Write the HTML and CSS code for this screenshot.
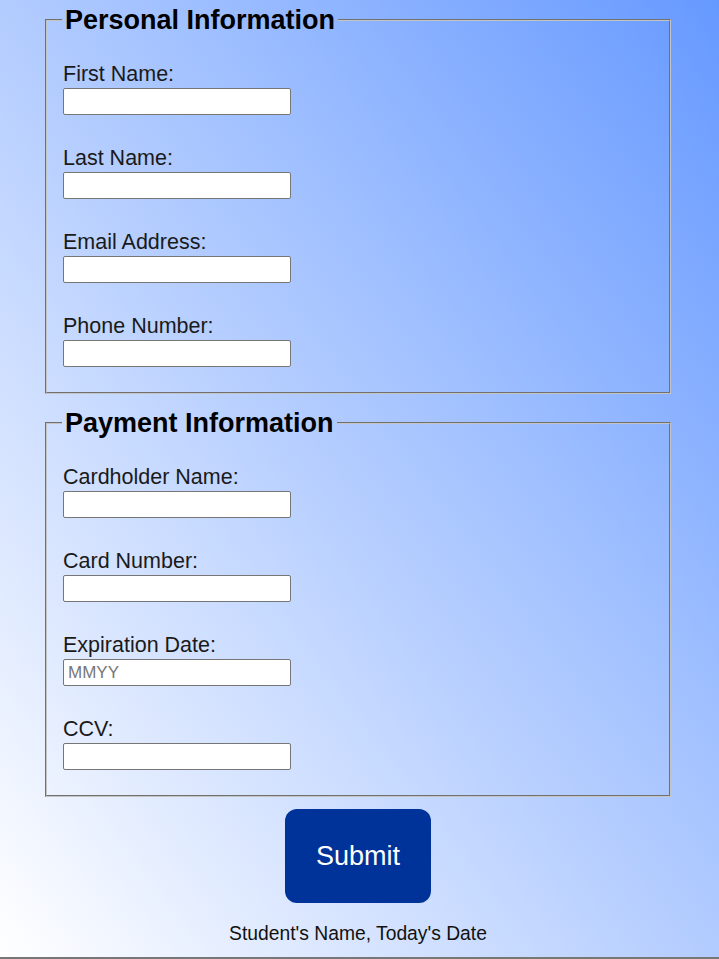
FILE: index.html
```html
<!DOCTYPE html>
<html lang="en">
<head>
<meta charset="utf-8">
<title>Order Form</title>
<link rel="stylesheet" href="styles.css">
</head>
<body>
<main class="page">
  <form class="form">
    <fieldset class="group">
      <legend class="group-title">Personal Information</legend>
      <div class="field"><label class="field-label" for="fn">First Name:</label><input class="field-input" id="fn" type="text"></div>
      <div class="field"><label class="field-label" for="ln">Last Name:</label><input class="field-input" id="ln" type="text"></div>
      <div class="field"><label class="field-label" for="em">Email Address:</label><input class="field-input" id="em" type="text"></div>
      <div class="field"><label class="field-label" for="ph">Phone Number:</label><input class="field-input" id="ph" type="text"></div>
    </fieldset>
    <fieldset class="group">
      <legend class="group-title">Payment Information</legend>
      <div class="field"><label class="field-label" for="cn">Cardholder Name:</label><input class="field-input" id="cn" type="text"></div>
      <div class="field"><label class="field-label" for="cc">Card Number:</label><input class="field-input" id="cc" type="text"></div>
      <div class="field"><label class="field-label" for="ex">Expiration Date:</label><input class="field-input" id="ex" type="text" placeholder="MMYY"></div>
      <div class="field"><label class="field-label" for="cv">CCV:</label><input class="field-input" id="cv" type="text"></div>
    </fieldset>
    <button class="submit" type="button">Submit</button>
    <footer class="footer">Student's Name, Today's Date</footer>
  </form>
</main>
</body>
</html>
```
FILE: styles.css
```css
html, body {
  margin: 0;
  padding: 0;
}
body {
  font-family: "Liberation Sans", Arial, sans-serif;
  color: #111;
  background: linear-gradient(to top right, #ffffff 0%, #6699ff 100%);
  min-height: 959px;
}
.page {
  box-sizing: border-box;
  height: 959px;
  padding: 6px 0 0 45px;
  border-bottom: 2px solid #777;
}
.form {
  width: 626px;
  display: flex;
  flex-direction: column;
  align-items: center;
}
.group {
  box-sizing: border-box;
  width: 626px;
  margin: 0 0 15px 0;
  padding: 0 14px 25px 16px;
  border: 2px groove #c4c4c4;
  display: flex;
  flex-direction: column;
  gap: 31px;
}
.group-title {
  font-size: 27px;
  font-weight: bold;
  line-height: 28px;
  padding: 0 3px;
  margin-left: -1px;
  color: #000;
}
.field {
  display: flex;
  flex-direction: column;
  align-items: flex-start;
  gap: 2px;
}
.group .field:first-of-type {
  margin-top: 28px;
}
.field-label {
  font-size: 21.5px;
  line-height: 24px;
  color: #1a1a1a;
}
.field-input {
  box-sizing: border-box;
  width: 228px;
  height: 27px;
  margin: 0;
  padding: 1px 4px;
  border: 1px solid #767676;
  border-radius: 2px;
  background: #fff;
  font-family: "Liberation Sans", Arial, sans-serif;
  font-size: 17px;
}
.field-input::placeholder {
  color: #777;
}
.submit {
  width: 146px;
  height: 94px;
  margin-top: -3px;
  border: none;
  border-radius: 12px;
  background: #003399;
  color: #fff;
  font-family: "Liberation Sans", Arial, sans-serif;
  font-size: 27px;
}
.footer {
  margin-top: 20px;
  font-size: 19.3px;
  line-height: 22px;
  color: #111;
}
```
